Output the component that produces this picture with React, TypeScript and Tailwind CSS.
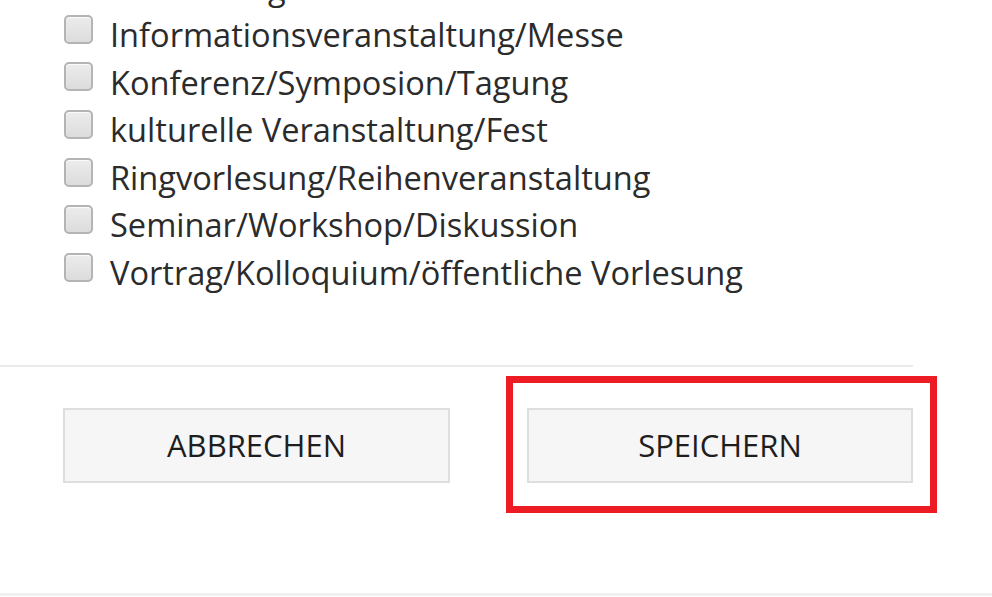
import { useState } from "react";

const categories = [
  "Einweihung",
  "Informationsveranstaltung/Messe",
  "Konferenz/Symposion/Tagung",
  "kulturelle Veranstaltung/Fest",
  "Ringvorlesung/Reihenveranstaltung",
  "Seminar/Workshop/Diskussion",
  "Vortrag/Kolloquium/öffentliche Vorlesung",
];

function CategoryRow({ label }: { label: string }) {
  const [checked, setChecked] = useState(false);
  return (
    <label className="flex h-[47.6px] items-center gap-[17px] cursor-pointer">
      <span
        onClick={() => setChecked(!checked)}
        className="-mt-[12px] flex h-[29px] w-[29px] shrink-0 items-center justify-center rounded-[5px] border-2 border-[#b4b4b4] bg-[linear-gradient(#ececec,#dcdcdc)] shadow-[inset_0_1px_1px_rgba(255,255,255,0.8)]"
      >
        {checked && <span className="text-[18px] leading-none text-[#333]">✓</span>}
      </span>
      <span className="whitespace-nowrap text-[32.6px] leading-none text-[#2b2b2b]">{label}</span>
    </label>
  );
}

export default function App() {
  return (
    <div className="h-[597px] w-[992px] overflow-hidden bg-white font-['Open_Sans',sans-serif]">
      {/* Liste */}
      <div className="-mt-[36px] pl-[64px]">
        {categories.map((c) => (
          <CategoryRow key={c} label={c} />
        ))}
      </div>

      <div className="mt-[68px] w-[913px] border-t-2 border-[#ebebeb]" />

      {/* Aktionen */}
      <div className="flex gap-[77px] pl-[63px] pt-[41px]">
        <button
          type="button"
          className="h-[75px] w-[387px] border-2 border-[#dedede] bg-[#f6f6f6] text-[31px] text-[#1e1e1e] uppercase"
        >
          Abbrechen
        </button>
        <div className="relative">
          <button
            type="button"
            className="h-[75px] w-[386px] border-2 border-[#dedede] bg-[#f6f6f6] text-[31px] text-[#1e1e1e] uppercase"
          >
            Speichern
          </button>
          <div className="pointer-events-none absolute -bottom-[30px] -left-[21px] -right-[24px] -top-[32px] border-[7px] border-[#ed1c24]" />
        </div>
      </div>

      <div className="mt-[110px] h-[3px] w-full bg-[#f0f0f0]" />
    </div>
  );
}
